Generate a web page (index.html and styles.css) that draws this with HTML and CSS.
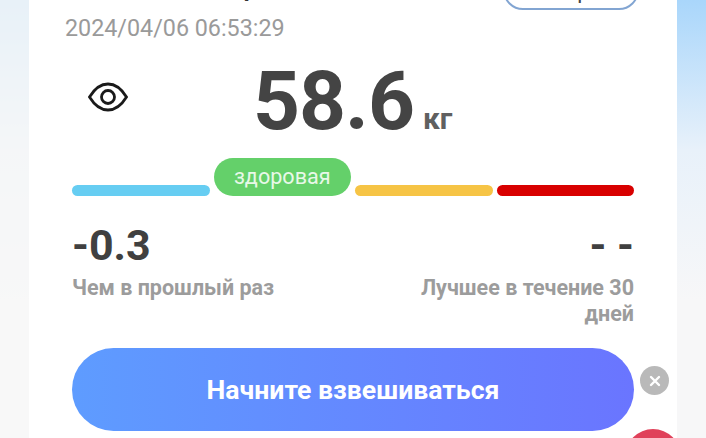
FILE: index.html
```html
<!DOCTYPE html>
<html lang="ru">
<head>
    <meta charset="UTF-8">
    <meta name="viewport" content="width=device-width, initial-scale=1.0">
    <title>Вес</title>
    <link rel="stylesheet" href="styles.css">
</head>
<body>
    <div class="card">
        <div class="head">
            <div>
                <h2 class="title">Сегодня вторник</h2>
                <p class="date">2024/04/06 06:53:29</p>
            </div>
            <button class="more-btn">История</button>
        </div>

        <div class="weight-row">
            <svg class="eye" viewBox="0 0 40 30" width="40" height="30">
                <path d="M1.5 15 C7 6 13 2 20 2 C27 2 33 6 38.500 15 C33 24 27 28 20 28 C13 28 7 24 1.500 15 Z" fill="none" stroke="#1a1a1a" stroke-width="2.800"/>
                <circle cx="20" cy="15" r="6.500" fill="none" stroke="#1a1a1a" stroke-width="2.800"/>
            </svg>
            <div class="weight"><span class="weight-num">58.6</span><span class="weight-unit">кг</span></div>
        </div>

        <div class="scale">
            <div class="seg seg-blue"></div>
            <div class="seg seg-green">здоровая</div>
            <div class="seg seg-yellow"></div>
            <div class="seg seg-red"></div>
        </div>

        <div class="stats">
            <div class="stat">
                <div class="stat-num">-0.3</div>
                <div class="stat-label">Чем в прошлый раз</div>
            </div>
            <div class="stat stat-right">
                <div class="stat-num">- -</div>
                <div class="stat-label">Лучшее в течение 30 дней</div>
            </div>
        </div>

        <div class="start-row">
            <button class="start-btn">Начните взвешиваться</button>
            <div class="close-btn">
                <svg viewBox="0 0 12 12" width="12" height="12">
                    <path d="M2 2 L10 10 M10 2 L2 10" stroke="#fff" stroke-width="2.400" stroke-linecap="round"/>
                </svg>
            </div>
        </div>
    </div>
    <div class="red-fab"></div>
</body>
</html>
```

FILE: styles.css
```css
body {
    font-family: Roboto, "Noto Sans", sans-serif;
    margin: 0;
    height: 438px;
    overflow: hidden;
    position: relative;
    background: linear-gradient(180deg, #a9d6fb 0, #e8f1fa 150px, #f7f7f8 300px);
}
.card {
    box-sizing: border-box;
    position: absolute;
    left: 29px;
    top: 0;
    width: 648px;
    height: 438px;
    padding: 0 43px;
    background-color: #fff;
    box-shadow: -29px 0 0 rgba(247, 247, 248, 0.8);
    overflow: hidden;
}
.head {
    display: flex;
    justify-content: space-between;
    align-items: flex-start;
    height: 74px;
    margin-top: -32px;
}
.title {
    margin: 0 0 0 11px;
    font-size: 28px;
    line-height: 36px;
    font-weight: 500;
    color: #333;
    white-space: nowrap;
}
.date {
    margin: 10px 0 0 -7px;
    font-size: 23.3px;
    line-height: 28px;
    color: #9a9a9a;
}
.more-btn {
    box-sizing: border-box;
    flex: none;
    width: 136px;
    height: 40px;
    margin: 2px -5px 0 0;
    font-family: Roboto, sans-serif;
    font-size: 22px;
    color: #444;
    background: #fff;
    border: 2px solid #82a5d2;
    border-radius: 20px;
    padding: 0;
}
.weight-row {
    display: flex;
    align-items: flex-start;
    height: 116px;
    margin-left: -1px;
}
.eye {
    margin: 40px 0 0 17px;
}
.weight {
    margin: 9px 0 0 125px;
    color: #444;
    line-height: 100px;
}
.weight-num {
    font-size: 82px;
    font-weight: 700;
    letter-spacing: -1px;
}
.weight-unit {
    margin-left: 9px;
    font-size: 30px;
    font-weight: 700;
    color: #606060;
}
.scale {
    display: flex;
    gap: 4px;
    align-items: flex-end;
}
.seg {
    flex: 1;
    height: 11px;
    border-radius: 6px;
}
.seg-blue { background-color: #66cdf2; }
.seg-yellow { background-color: #f6c445; }
.seg-red { background-color: #d80000; }
.seg-green {
    height: 38px;
    border-radius: 19px;
    background-color: #64d06a;
    color: #e8f8e8;
    font-size: 21.6px;
    line-height: 38px;
    text-align: center;
}
.stats {
    display: flex;
    justify-content: space-between;
    margin-top: 23px;
}
.stat {
    width: 230px;
}
.stat-right {
    text-align: right;
}
.stat-num {
    font-size: 43px;
    line-height: 52px;
    font-weight: 700;
    color: #404040;
}
.stat-label {
    margin-top: 4px;
    font-size: 21.5px;
    line-height: 26px;
    font-weight: 700;
    color: #9c9c9c;
}
.start-row {
    position: relative;
    margin-top: 21px;
}
.start-btn {
    display: block;
    width: 100%;
    height: 83px;
    border: none;
    border-radius: 42px;
    background: linear-gradient(90deg, #5e9cff, #6a75ff);
    color: #fff;
    font-family: Roboto, sans-serif;
    font-size: 26.6px;
    font-weight: 700;
}
.close-btn {
    position: absolute;
    left: 568px;
    top: 18px;
    width: 29px;
    height: 29px;
    border-radius: 50%;
    background-color: #b9b9b9;
    display: flex;
    align-items: center;
    justify-content: center;
}
.red-fab {
    position: absolute;
    left: 625px;
    top: 429px;
    width: 56px;
    height: 56px;
    border-radius: 50%;
    background-color: #e0415a;
}
```
